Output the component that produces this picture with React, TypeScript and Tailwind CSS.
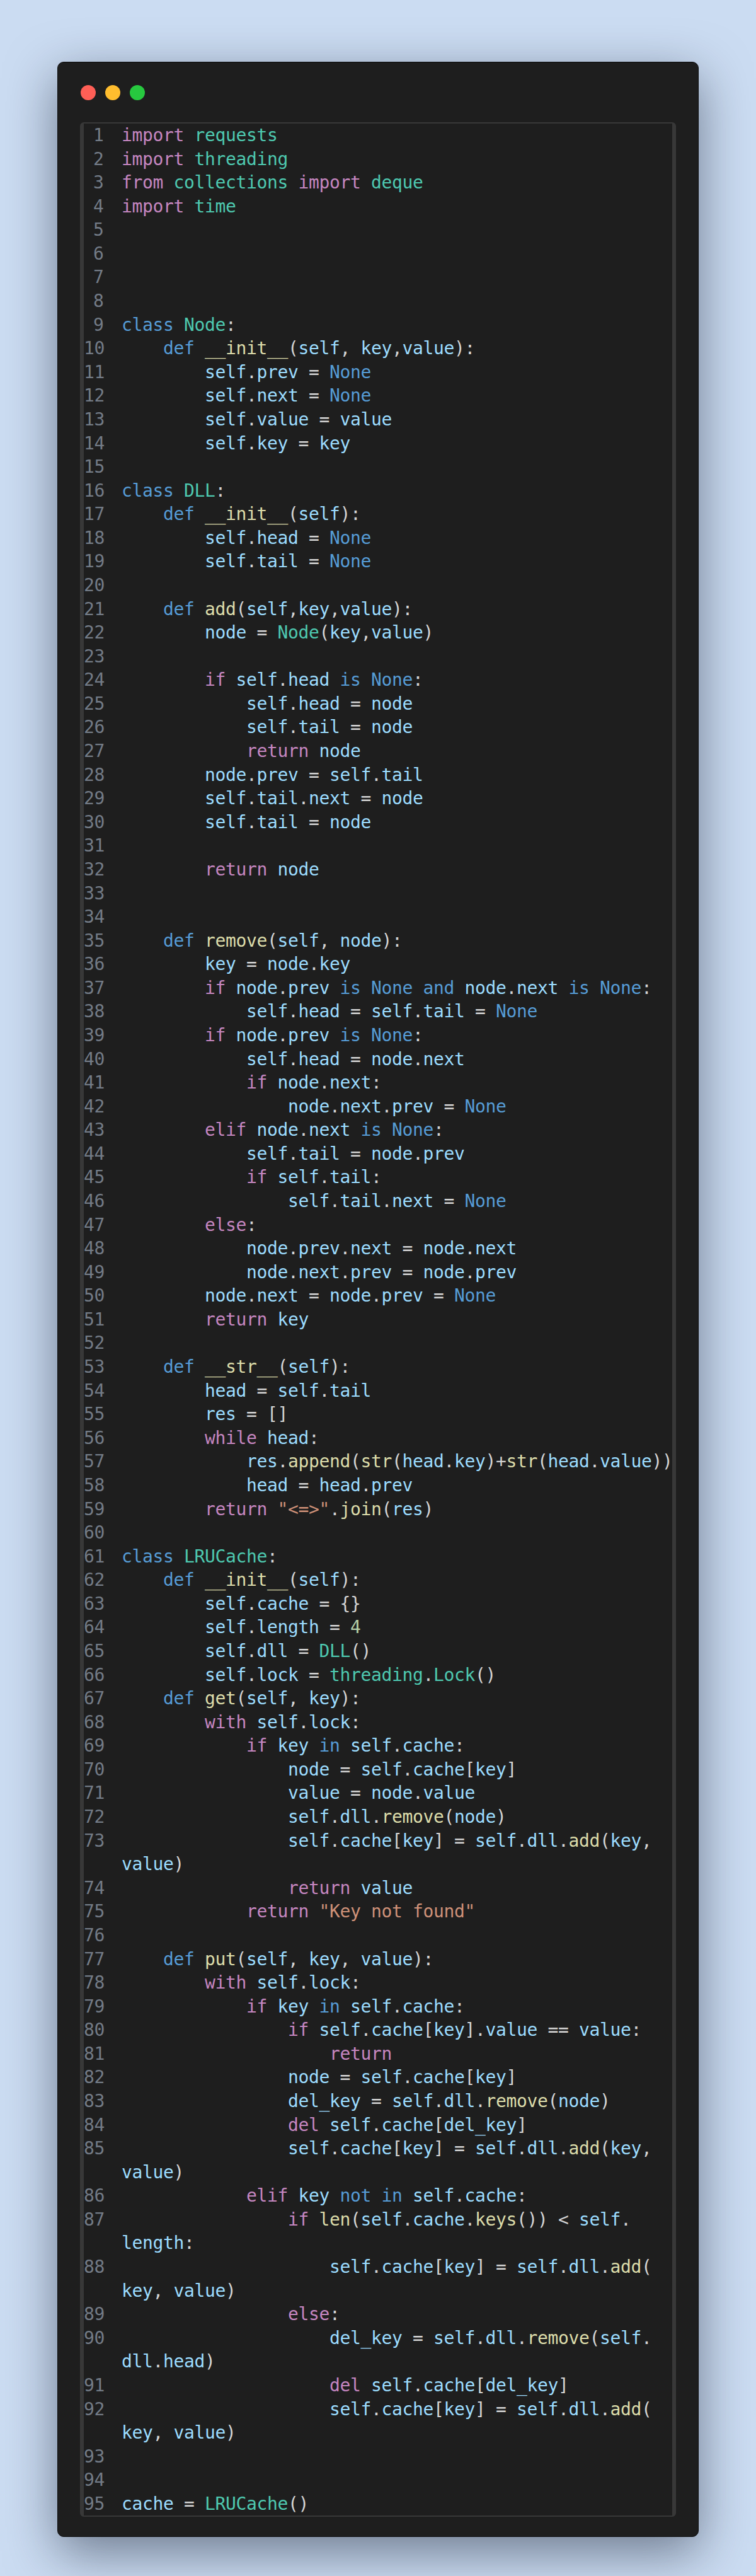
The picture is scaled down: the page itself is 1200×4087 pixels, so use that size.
import React from 'react';

const CODE = `import requests
import threading
from collections import deque
import time




class Node:
    def __init__(self, key,value):
        self.prev = None
        self.next = None
        self.value = value
        self.key = key

class DLL:
    def __init__(self):
        self.head = None
        self.tail = None

    def add(self,key,value):
        node = Node(key,value)

        if self.head is None:
            self.head = node
            self.tail = node
            return node
        node.prev = self.tail
        self.tail.next = node
        self.tail = node

        return node


    def remove(self, node):
        key = node.key
        if node.prev is None and node.next is None:
            self.head = self.tail = None
        if node.prev is None:
            self.head = node.next
            if node.next:
                node.next.prev = None
        elif node.next is None:
            self.tail = node.prev
            if self.tail:
                self.tail.next = None
        else:
            node.prev.next = node.next
            node.next.prev = node.prev
        node.next = node.prev = None
        return key

    def __str__(self):
        head = self.tail
        res = []
        while head:
            res.append(str(head.key)+str(head.value))
            head = head.prev
        return "<=>".join(res)

class LRUCache:
    def __init__(self):
        self.cache = {}
        self.length = 4
        self.dll = DLL()
        self.lock = threading.Lock()
    def get(self, key):
        with self.lock:
            if key in self.cache:
                node = self.cache[key]
                value = node.value
                self.dll.remove(node)
                self.cache[key] = self.dll.add(key, value)
                return value
            return "Key not found"

    def put(self, key, value):
        with self.lock:
            if key in self.cache:
                if self.cache[key].value == value:
                    return
                node = self.cache[key]
                del_key = self.dll.remove(node)
                del self.cache[del_key]
                self.cache[key] = self.dll.add(key, value)
            elif key not in self.cache:
                if len(self.cache.keys()) < self.length:
                    self.cache[key] = self.dll.add(key, value)
                else:
                    del_key = self.dll.remove(self.dll.head)
                    del self.cache[del_key]
                    self.cache[key] = self.dll.add(key, value)


cache = LRUCache()`;

// where the long lines break onto a second row
const WRAPS: Record<number, string> = {
  73: 'add(key,',
  85: 'add(key,',
  87: '< self.',
  88: 'add(',
  90: 'remove(self.',
  92: 'add(',
};

const COLORS = {
  control: 'text-[#c586c0]',
  keyword: 'text-[#569cd6]',
  type: 'text-[#4ec9b0]',
  fn: 'text-[#dcdcaa]',
  variable: 'text-[#9cdcfe]',
  string: 'text-[#ce9178]',
  number: 'text-[#b5cea8]',
  punct: 'text-[#d4d4d4]',
};

const CONTROL = new Set(['import', 'from', 'return', 'if', 'elif', 'else', 'while', 'with', 'del']);
const KEYWORDS = new Set(['def', 'class', 'None', 'is', 'and', 'in', 'not', 'True', 'False']);

type Tok = { t: string; c: string };

function tokenize(line: string): Tok[] {
  const parts = line.match(/"[^"]*"|[A-Za-z_]\w*|\d+|\s+|==|./g) || [];
  const isImport = /^(import|from)\b/.test(line);
  let prevWord = '';
  return parts.map((p, i) => {
    let c = COLORS.punct;
    if (p.startsWith('"')) c = COLORS.string;
    else if (/^\d/.test(p)) c = COLORS.number;
    else if (/^[A-Za-z_]/.test(p)) {
      const rest = parts.slice(i + 1).join('').trimStart();
      if (CONTROL.has(p)) c = COLORS.control;
      else if (KEYWORDS.has(p)) c = COLORS.keyword;
      else if (prevWord === 'class' || isImport || p === 'threading') c = COLORS.type;
      else if (rest.startsWith('(')) c = /^[A-Z]/.test(p) ? COLORS.type : COLORS.fn;
      else c = COLORS.variable;
    }
    if (!/^\s+$/.test(p)) prevWord = p;
    return { t: p, c };
  });
}

function splitAt(toks: Tok[], idx: number): Tok[][] {
  const a: Tok[] = [];
  const b: Tok[] = [];
  let pos = 0;
  for (const tk of toks) {
    const end = pos + tk.t.length;
    if (end <= idx) a.push(tk);
    else if (pos >= idx) b.push(tk);
    else {
      a.push({ t: tk.t.slice(0, idx - pos), c: tk.c });
      b.push({ t: tk.t.slice(idx - pos), c: tk.c });
    }
    pos = end;
  }
  while (b.length && /^\s*$/.test(b[0].t)) b.shift();
  return [a, b];
}

type Row = { n: number | null; toks: Tok[] };

function buildRows(): Row[] {
  const rows: Row[] = [];
  CODE.split('\n').forEach((text, i) => {
    const n = i + 1;
    const toks = tokenize(text);
    const marker = WRAPS[n];
    if (marker) {
      const [a, b] = splitAt(toks, text.indexOf(marker) + marker.length);
      rows.push({ n, toks: a }, { n: null, toks: b });
    } else {
      rows.push({ n, toks });
    }
  });
  return rows;
}

export default function App() {
  const rows = buildRows();
  return (
    <div className="min-h-[4087px] bg-[#cbdcf2] pt-[98px] px-[91px] pb-[99px]">
      <div className="rounded-[10px] bg-[#1e1e1e] border border-[#0c0c0c] shadow-[0_24px_80px_rgba(15,23,42,0.5)] px-[35px] pt-[36px] pb-[31px]">
        <div className="flex gap-[15px] pl-[1px] mb-[35px]">
          <span className="w-[24px] h-[24px] rounded-full bg-[#ff5f56]" />
          <span className="w-[24px] h-[24px] rounded-full bg-[#ffbd2e]" />
          <span className="w-[24px] h-[24px] rounded-full bg-[#27c93f]" />
        </div>
        <div className="grid grid-cols-[60px_1fr] auto-rows-[37.58px] rounded-[6px] border-x-[6px] border-y-[2px] border-[#383838] bg-[#1e1e1e] font-['DejaVu_Sans_Mono',monospace] text-[28px] leading-[37.58px] tracking-[-0.36px]">
          {rows.map((row, i) => (
            <React.Fragment key={i}>
              <div className="text-right pr-[28.5px] text-[#737b86]">{row.n ?? ''}</div>
              <div className="whitespace-pre">
                {row.toks.map((tk, j) => (
                  <span key={j} className={tk.c}>{tk.t}</span>
                ))}
              </div>
            </React.Fragment>
          ))}
        </div>
      </div>
    </div>
  );
}
